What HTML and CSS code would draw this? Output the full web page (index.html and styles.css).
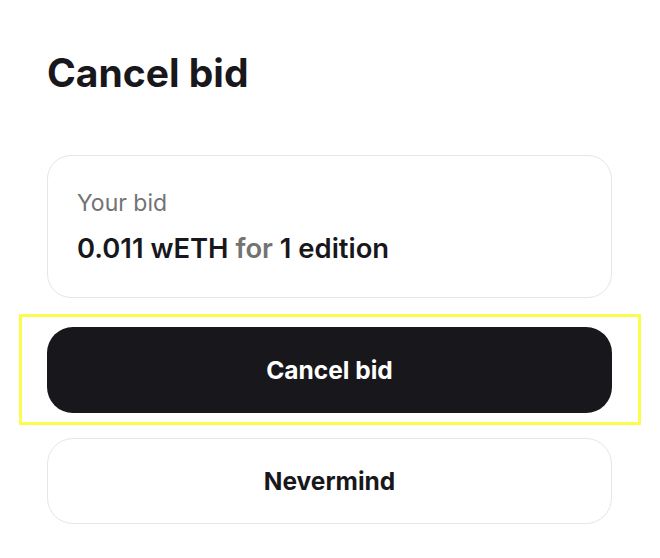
FILE: index.html
```html
<!DOCTYPE html>
<html>
<head>
<meta charset="utf-8">
<link rel="stylesheet" href="styles.css">
</head>
<body>
<div class="modal">
  <h1 class="title">Cancel bid</h1>
  <div class="bid-card">
    <div class="bid-label">Your bid</div>
    <div class="bid-value">0.011 wETH <span class="muted">for</span> 1 edition</div>
  </div>
  <div class="primary-wrap">
    <button class="btn btn-primary">Cancel bid</button>
    <div class="highlight"></div>
  </div>
  <button class="btn btn-secondary">Nevermind</button>
</div>
</body>
</html>
```
FILE: styles.css
```css
html, body {
  margin: 0;
  padding: 0;
  background: #ffffff;
}
body {
  font-family: Inter, "Noto Sans", sans-serif;
  color: #18171c;
}
.modal {
  width: 565px;
  padding: 50px 0 0 47px;
  display: flex;
  flex-direction: column;
}
.title {
  margin: 0;
  font-size: 39px;
  font-weight: 700;
  line-height: 46px;
}
.bid-card {
  margin-top: 59px;
  border: 1px solid #e6e6e6;
  border-radius: 24px;
  height: 143px;
  box-sizing: border-box;
  padding: 33px 29px 0;
}
.bid-label {
  font-size: 23px;
  line-height: 28px;
  color: #737373;
}
.bid-value {
  margin-top: 15px;
  font-size: 27.4px;
  font-weight: 600;
  line-height: 32px;
}
.muted {
  color: #737373;
}
.primary-wrap {
  position: relative;
  margin-top: 29px;
}
.btn {
  display: block;
  width: 565px;
  height: 86px;
  border-radius: 26px;
  font-family: Inter, "Noto Sans", sans-serif;
  font-size: 24.5px;
  font-weight: 700;
  cursor: pointer;
}
.btn-primary {
  background: #18171c;
  color: #ffffff;
  border: none;
}
.btn-secondary {
  margin-top: 25px;
  background: #ffffff;
  color: #18171c;
  border: 1px solid #e6e6e6;
}
.highlight {
  position: absolute;
  left: -28px;
  top: -13px;
  width: 622px;
  height: 111px;
  box-sizing: border-box;
  border: 3px solid #fcfc4c;
  pointer-events: none;
}
```
